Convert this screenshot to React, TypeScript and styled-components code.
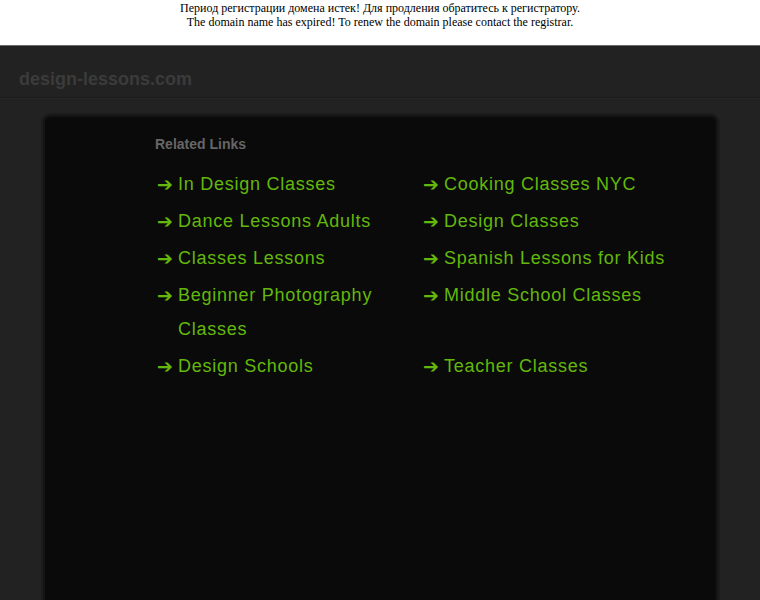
import styled, { createGlobalStyle } from "styled-components";

const GlobalStyle = createGlobalStyle`
  html, body {
    margin: 0;
    padding: 0;
    background: #222222;
    height: 100%;
  }
  #root {
    min-height: 100%;
  }
`;

const Page = styled.div`
  min-height: 600px;
  display: flex;
  flex-direction: column;
  background: #222222;
  font-family: "Liberation Sans", Arial, sans-serif;
`;

const Notice = styled.div`
  height: 45px;
  background: #ffffff;
  color: #000000;
  font-family: "Liberation Serif", "Times New Roman", serif;
  font-size: 12px;
  line-height: 14px;
  text-align: center;
  padding-top: 1px;
  box-sizing: border-box;
`;

const Header = styled.div`
  height: 53px;
  box-sizing: border-box;
  border-top: 1px solid #6a6a6a;
  border-bottom: 1px solid #1b1b1b;
  box-shadow: 0 1px 0 #262626;
  padding: 22px 0 0 19px;
`;

const SiteName = styled.div`
  font-size: 18px;
  font-weight: bold;
  color: #3b3b3b;
  line-height: 22px;
`;

const Body = styled.div`
  flex: 1;
  display: flex;
  padding: 17px 42px 0 43px;
`;

const Panel = styled.div`
  flex: 1;
  background: #0a0a0a;
  border: 2px solid #141414;
  border-bottom: none;
  border-radius: 8px 8px 0 0;
  box-shadow: 0 0 0 2px #1b1b1b;
  padding: 18px 0 0 110px;
`;

const Title = styled.div`
  font-size: 14px;
  font-weight: bold;
  color: #666666;
  line-height: 18px;
  margin-bottom: 14px;
`;

const LinkGrid = styled.div`
  display: grid;
  grid-template-columns: 266px 266px;
  align-items: start;
  padding-left: 2px;
`;

const LinkItem = styled.div`
  display: flex;
  font-size: 18px;
  line-height: 34px;
  letter-spacing: 0.75px;
  color: #63b80b;
  margin-bottom: 3px;
`;

const Arrow = styled.span`
  flex: 0 0 21px;
  font-family: "DejaVu Sans", sans-serif;
  font-size: 19px;
  font-weight: bold;
  letter-spacing: 0;
`;

const Label = styled.span`
  flex: 1;
`;

const left = [
  "In Design Classes",
  "Dance Lessons Adults",
  "Classes Lessons",
  "Beginner Photography Classes",
  "Design Schools",
];

const right = [
  "Cooking Classes NYC",
  "Design Classes",
  "Spanish Lessons for Kids",
  "Middle School Classes",
  "Teacher Classes",
];

export default function App() {
  const rows = left.flatMap((l, i) => [l, right[i]]);
  return (
    <>
      <GlobalStyle />
      <Page>
        <Notice>
          Период регистрации домена истек! Для продления обратитесь к регистратору.
          <br />
          The domain name has expired! To renew the domain please contact the registrar.
        </Notice>
        <Header>
          <SiteName>design-lessons.com</SiteName>
        </Header>
        <Body>
          <Panel>
            <Title>Related Links</Title>
            <LinkGrid>
              {rows.map((text, i) => (
                <LinkItem key={i}>
                  <Arrow>➔</Arrow>
                  <Label>{text}</Label>
                </LinkItem>
              ))}
            </LinkGrid>
          </Panel>
        </Body>
      </Page>
    </>
  );
}
